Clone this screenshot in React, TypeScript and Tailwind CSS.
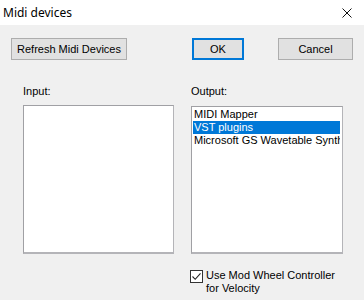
import React from 'react';

const font = { fontFamily: '"Liberation Sans", Arial, sans-serif' };

function Button({ label, className }: { label: string; className: string }) {
  return (
    <button
      className={`h-[22px] bg-[#e1e1e1] text-[11px] leading-none text-black ${className}`}
    >
      {label}
    </button>
  );
}

export default function App() {
  const outputs = ['MIDI Mapper', 'VST plugins', 'Microsoft GS Wavetable Synth'];
  const selected = 1;

  return (
    <div className="w-[364px] h-[300px] bg-[#f0f0f0] flex flex-col overflow-hidden" style={font}>
      {/* title bar */}
      <div className="h-[25px] bg-white flex items-center justify-between pl-[3px] pr-[12px] shrink-0">
        <span className="text-[12px] text-black" style={{ fontFamily: '"Noto Sans", "Liberation Sans", sans-serif' }}>
          Midi devices
        </span>
        <svg width="10" height="10" viewBox="0 0 10 10" className="mt-[1px]">
          <path d="M0.5 0.5 L9.5 9.5 M9.5 0.5 L0.5 9.5" stroke="#111" strokeWidth="1" fill="none" />
        </svg>
      </div>

      {/* buttons */}
      <div className="flex pl-[11px] pt-[13px]">
        <Button label="Refresh Midi Devices" className="w-[116px] border border-[#adadad]" />
        <Button label="OK" className="w-[52px] ml-[65px] border-2 border-[#0078d7]" />
        <Button label="Cancel" className="w-[75px] ml-[34px] border border-[#adadad]" />
      </div>

      {/* lists */}
      <div className="grid grid-cols-[151px_152px] gap-x-[17px] pl-[23px] pt-[25px]">
        <div className="text-[11px] leading-[13px] text-black">Input:</div>
        <div className="text-[11px] leading-[13px] text-black">Output:</div>

        <div className="mt-[7px] h-[149px] bg-white border border-[#a0a0a4] border-b-2 border-r-[#b4b4b8] border-b-[#b4b4b8]" />
        <div className="mt-[8px] h-[148px] bg-white border border-[#a0a0a4] border-b-2 border-r-[#b4b4b8] border-b-[#b4b4b8] overflow-hidden pt-[1px] pl-[1px] pr-[2px]">
          {outputs.map((o, i) => (
            <div
              key={o}
              className={`h-[13px] text-[11px] leading-[13px] whitespace-nowrap overflow-hidden pl-[1px] ${
                i === selected ? 'bg-[#0078d7] text-white' : 'text-black'
              }`}
            >
              {o}
            </div>
          ))}
        </div>

        <div />
        <div className="flex items-start mt-[15px] -ml-[1px]">
          <div className="w-[13px] h-[13px] bg-white border border-[#333] flex items-center justify-center mt-[1px] shrink-0">
            <svg width="11" height="11" viewBox="0 0 11 11">
              <path d="M1.5 5.5 L4.2 8.3 L9.5 2.3" stroke="#222" strokeWidth="1.1" fill="none" />
            </svg>
          </div>
          <div className="ml-[3px] text-[11px] leading-[13px] text-black">
            Use Mod Wheel Controller
            <br />
            for Velocity
          </div>
        </div>
      </div>
    </div>
  );
}
